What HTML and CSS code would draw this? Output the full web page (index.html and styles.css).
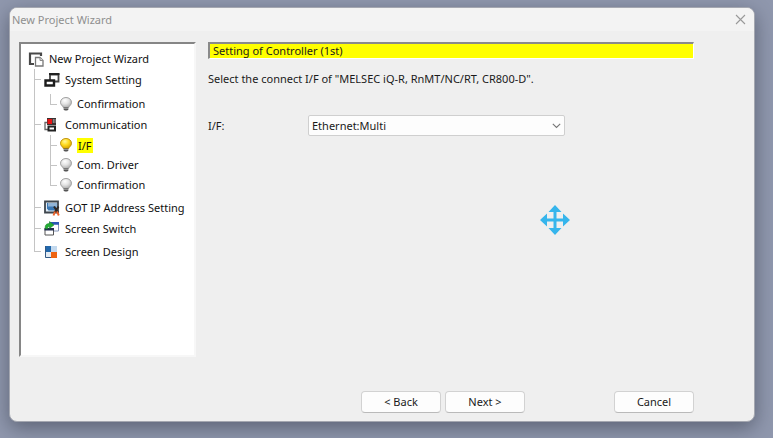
FILE: index.html
```html
<!DOCTYPE html>
<html lang="en">
<head>
<meta charset="utf-8">
<title>New Project Wizard</title>
<link rel="stylesheet" href="styles.css">
</head>
<body>
<svg class="defs" width="0" height="0" aria-hidden="true">
  <defs>
    <radialGradient id="glass" cx="0.4" cy="0.3" r="0.7"><stop offset="0" stop-color="#ffffff"/><stop offset="0.5" stop-color="#e4e4e4"/><stop offset="1" stop-color="#b0b0b0"/></radialGradient>
    <radialGradient id="glow" cx="0.4" cy="0.3" r="0.7"><stop offset="0" stop-color="#fff79a"/><stop offset="0.5" stop-color="#ffdb20"/><stop offset="1" stop-color="#d8a400"/></radialGradient>
    <symbol id="bulb" viewBox="0 0 12 14">
      <path d="M6 .5C2.900.5.5 2.600.5 5.300c0 1.800 1 2.700 1.900 3.700.5.600.8 1 .9 1.500h5.400c.1-.5.4-.900.9-1.500.900-1 1.900-1.900 1.900-3.700C11.500 2.600 9.100.5 6 .5z" stroke-width=".9"/>
      <path d="M3.700 10.500h4.600v1.700l-1 1.300H4.700l-1-1.300z" fill="#555" stroke="none"/>
      <path d="M4 11.500h4" stroke="#bbb" stroke-width=".6"/>
    </symbol>
  </defs>
</svg>
<main class="window">
  <header class="titlebar">
    <h1 class="title">New Project Wizard</h1>
    <button class="close" type="button" aria-label="Close">
      <svg width="11" height="11" viewBox="0 0 11 11"><path d="M1 1l9 9M10 1l-9 9" stroke="#999" stroke-width="1.100" fill="none"/></svg>
    </button>
  </header>
  <div class="content">
    <nav class="tree" aria-label="Wizard steps">
      <div class="row root">
        <svg width="16" height="16" viewBox="0 0 16 16"><path d="M6 13H2V2.500h11V5" fill="none" stroke="#484848" stroke-width="2.200"/><path d="M7.500 6.500h4.500l3 3v5.500H7.500z" fill="#fff" stroke="#777" stroke-width="1.300"/><path d="M12 6.500v3h3" fill="#ddd" stroke="#888"/></svg>
        <span>New Project Wizard</span>
      </div>
      <ul class="branch">
        <li>
          <div class="row">
            <svg width="16" height="16" viewBox="0 0 16 16"><path d="M6 2.500h8.500v7H6z" fill="#fff" stroke="#444" stroke-width="1.800"/><path d="M5 2h10.500" stroke="#222" stroke-width="2"/><path d="M1.500 8.500h8.500v5H1.500z" fill="#fff" stroke="#1c1c1c" stroke-width="2.400"/></svg>
            <span>System Setting</span>
          </div>
          <ul class="leaves spaced">
            <li><div class="row"><svg width="12" height="14" fill="url(#glass)" stroke="#999"><use href="#bulb"/></svg><span>Confirmation</span></div></li>
          </ul>
        </li>
        <li>
          <div class="row">
            <svg width="16" height="16" viewBox="0 0 16 16"><path d="M3 1h9v7H3z" fill="#3a3030"/><path d="M3.500 2h4.500v5H3.500z" fill="#e81414"/><path d="M9.300 2v4M11 2v4" stroke="#b5b5b5" stroke-width=".8"/><path d="M3 5.500H1v7h3" fill="none" stroke="#666" stroke-width="1.300"/><path d="M4.500 9.500h6.500v4H4.500z" fill="#fff" stroke="#222" stroke-width="2"/></svg>
            <span>Communication</span>
          </div>
          <ul class="leaves">
            <li><div class="row"><svg width="12" height="14" fill="url(#glow)" stroke="#b98a00"><use href="#bulb"/></svg><span class="current" aria-current="step">I/F</span></div></li>
            <li><div class="row"><svg width="12" height="14" fill="url(#glass)" stroke="#999"><use href="#bulb"/></svg><span>Com. Driver</span></div></li>
            <li><div class="row"><svg width="12" height="14" fill="url(#glass)" stroke="#999"><use href="#bulb"/></svg><span>Confirmation</span></div></li>
          </ul>
        </li>
        <li class="after-leaves">
          <div class="row">
            <svg width="16" height="16" viewBox="0 0 16 16"><path d="M1 1.500h13v11H1z" fill="#e4eef6" stroke="#3f464d" stroke-width="1.800"/><path d="M3 3h9.500v5.500L11 10.500H4.500L3 8.500z" fill="#3a78b5"/><path d="M5 3v3.500M7 3v3.500M9 3v3.500M11 3v3.500" stroke="#fff" stroke-width=".9"/><path d="M10 6.500l4 6M14.500 6.500l-4 6" stroke="#302822" stroke-width="2"/><path d="M11 11.500L9.500 15.500M13 11.500l1.800 4" stroke="#f0642a" stroke-width="1.900"/></svg>
            <span>GOT IP Address Setting</span>
          </div>
        </li>
        <li>
          <div class="row">
            <svg width="16" height="16" viewBox="0 0 16 16"><path d="M6 1.500h8.500v8.500H6z" fill="#fff" stroke="#8494b8"/><path d="M5.500 1H15v2.800H5.500z" fill="#2c57b4"/><path d="M1 7.500h8.500v6.500H1z" fill="#fff" stroke="#555"/><path d="M.5 7h9.500v2.500H.5z" fill="#222c50"/><path d="M1.200 7.500C.7 3.500 3 2.500 5.500 2.500V.5L10 4 5.500 7.500v-2C4 5.500 3.500 6.500 3.700 8z" fill="#25ad35" stroke="#168326" stroke-width=".5"/></svg>
            <span>Screen Switch</span>
          </div>
        </li>
        <li class="after-gap">
          <div class="row">
            <svg width="16" height="16" viewBox="0 0 16 16"><path d="M1 2h12v12H1z" fill="#e3ebf3"/><path d="M1 2h6v6H1z" fill="#2268ac"/><path d="M7 2h6v6H7z" fill="#c3d9ee"/><path d="M7 8h6v6H7z" fill="#ee6412"/><path d="M1.500 2v11.500H7" fill="none" stroke="#345a85"/></svg>
            <span>Screen Design</span>
          </div>
        </li>
      </ul>
    </nav>
    <section class="panel">
      <h2 class="heading">Setting of Controller (1st)</h2>
      <p class="hint">Select the connect I/F of "MELSEC iQ-R, RnMT/NC/RT, CR800-D".</p>
      <div class="field">
        <label for="interface">I/F:</label>
        <div class="combo">
          <select id="interface"><option>Ethernet:Multi</option></select>
          <svg class="chevron" width="9" height="6" viewBox="0 0 9 6"><path d="M.8.8l3.700 3.700L8.200.8" fill="none" stroke="#777" stroke-width="1.100"/></svg>
        </div>
      </div>
      <svg class="move" width="30" height="30" viewBox="0 0 30 30"><path d="M15 0l6.500 7H16.500v6.500H23V8.500l7 6.500-7 6.500v-5H16.500V23h5L15 30l-6.500-7h5v-6.500H7v5L0 15l7-6.500v5h6.500V7h-5z" fill="#36b5ec"/></svg>
      <footer class="actions">
        <button class="btn" type="button">&lt; Back</button>
        <button class="btn" type="button">Next &gt;</button>
        <button class="btn cancel" type="button">Cancel</button>
      </footer>
    </section>
  </div>
</main>
</body>
</html>
```
FILE: styles.css
```css
* { box-sizing: border-box; }

body {
  margin: 0;
  min-height: 100vh;
  display: flex;
  padding: 7px 18px 16px 9px;
  background: #9098ae;
  color: #1a1a1a;
  font: 11px/16px "Noto Sans", sans-serif;
}

h1, h2, p, ul { margin: 0; padding: 0; font: inherit; }
ul { list-style: none; }
svg { display: block; flex: none; }
.defs { position: absolute; }
button, select { font: inherit; color: inherit; }

.window {
  flex: 1;
  display: flex;
  flex-direction: column;
  overflow: hidden;
  background: #efefef;
  border: 1px solid #a4a7b0;
  border-radius: 8px;
  box-shadow: 0 6px 20px rgba(40, 45, 60, 0.5);
}

.titlebar {
  display: flex;
  align-items: center;
  justify-content: space-between;
  height: 23px;
  padding: 0 8px 0 2px;
  background: #f3f3f3;
}
.title { color: #8f8f8f; }
.close { padding: 0; border: 0; background: none; }

.content {
  flex: 1;
  display: flex;
  gap: 12px;
  padding: 11px 60px 8px 9px;
}

.tree {
  flex: none;
  width: 177px;
  margin-bottom: 56px;
  padding: 4px 0 0 7px;
  background: #fff;
  border: 2px solid #868686;
  border-right-color: #f7f7f7;
  border-bottom-color: #f7f7f7;
  color: #111;
  white-space: nowrap;
}
.row { display: flex; align-items: center; gap: 5px; height: 21px; }
.branch { margin-left: 6px; }
.leaves { margin-left: 6px; }
.leaves.spaced { padding-top: 4px; }
.leaves .row { gap: 5px; height: 20px; }
.branch li {
  --mid: 10px;
  padding-left: 10px;
  background:
    linear-gradient(#c4c4c4, #c4c4c4) 0 var(--mid) / 7px 1px no-repeat,
    linear-gradient(#c4c4c4, #c4c4c4) 0 0 / 1px 100% no-repeat;
}
.branch li:last-child {
  background-size: 7px 1px, 1px var(--mid);
}
.branch .after-leaves,
.branch .after-gap {
  --mid: 12px;
  padding-top: 2px;
}
.current { padding: 0 1px; background: #ff0; line-height: 15px; }

.panel {
  position: relative;
  flex: 1;
  display: flex;
  flex-direction: column;
}
.heading {
  height: 17px;
  padding-left: 3px;
  background: #ff0;
  border: 1px solid #fff;
  border-top: 2px solid #8a8a8a;
  border-left: 2px solid #8a8a8a;
  line-height: 14px;
}
.hint { margin-top: 12px; }
.field { display: flex; align-items: center; margin-top: 28px; }
.field label { width: 100px; }
.combo { position: relative; width: 257px; }
.combo select {
  display: block;
  appearance: none;
  width: 100%;
  height: 21px;
  padding: 0 20px 0 3px;
  background: #fdfdfd;
  border: 1px solid #cfcfcf;
  border-radius: 2px;
}
.chevron { position: absolute; right: 4px; top: 8px; pointer-events: none; }
.move { position: absolute; left: 332px; top: 163px; }

.actions { display: flex; gap: 4px; margin: auto 0 0 153px; }
.btn {
  width: 80px;
  height: 22px;
  padding: 0;
  background: #fdfdfd;
  border: 1px solid #d2d2d2;
  border-bottom-color: #bababa;
  border-radius: 4px;
}
.cancel { margin-left: auto; }
```
